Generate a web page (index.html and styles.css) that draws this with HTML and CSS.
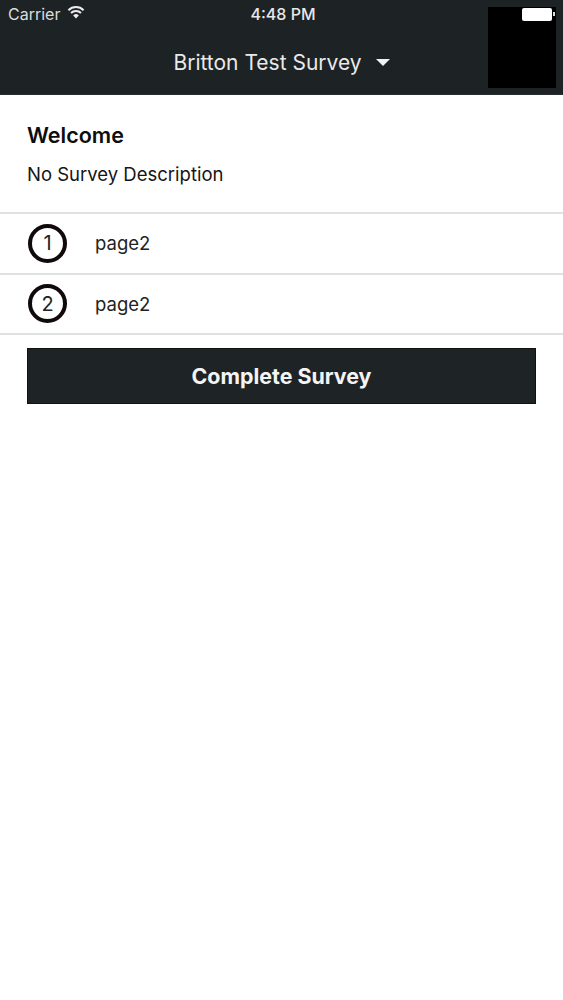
FILE: index.html
```html
<!DOCTYPE html>
<html lang="en">
<head>
<meta charset="utf-8">
<title>Britton Test Survey</title>
<link rel="stylesheet" href="styles.css">
</head>
<body>
<header class="topbar">
  <div class="status">
    <div class="status-left">
      <span class="carrier">Carrier</span>
      <svg class="wifi" viewBox="0 0 18 13" width="18" height="13"><path d="M9 12.6 6.2 9.4a4 4 0 0 1 5.6 0Z" fill="#ececec"/><path d="M4 7a7 7 0 0 1 10 0" fill="none" stroke="#ececec" stroke-width="2"/><path d="M1.4 4.2a10.8 10.8 0 0 1 15.2 0" fill="none" stroke="#ececec" stroke-width="2"/></svg>
    </div>
    <span class="time">4:48 PM</span>
  </div>
  <div class="title-row">
    <span class="title">Britton Test Survey</span>
    <span class="caret"></span>
  </div>
  <div class="blackout">
    <span class="battery"></span>
    <span class="battery-tip"></span>
  </div>
</header>
<main>
  <section class="intro">
    <h1>Welcome</h1>
    <p>No Survey Description</p>
  </section>
  <ul class="pages">
    <li><span class="num">1</span><span class="name">page2</span></li>
    <li><span class="num">2</span><span class="name">page2</span></li>
  </ul>
  <div class="actions"><button class="complete">Complete Survey</button></div>
</main>
</body>
</html>
```
FILE: styles.css
```css
* { box-sizing: border-box; }
html, body { margin: 0; padding: 0; }
body {
  width: 563px;
  height: 1000px;
  background: #fff;
  font-family: Inter, "Liberation Sans", sans-serif;
  color: #151515;
  overflow: hidden;
}
.topbar {
  position: relative;
  height: 95px;
  background: #1d2225;
  border-bottom: 1px solid #2a2e30;
  color: #eee;
}
.status {
  position: relative;
  height: 29px;
  padding: 5px 0 0 8px;
}
.status-left { display: flex; align-items: center; gap: 7px; height: 18px; }
.carrier { font-size: 16px; color: #dcdcdc; }
.wifi { margin-top: -4px; }
.time {
  position: absolute;
  top: 5px;
  left: 0;
  width: 100%;
  text-align: center;
  line-height: 18px;
  font-size: 16px;
  font-weight: 500;
  color: #e8e8e8;
  padding-left: 3px;
}
.title-row {
  display: flex;
  align-items: center;
  justify-content: center;
  height: 36px;
  margin-top: 15px;
  gap: 14px;
}
.title { font-size: 21px; color: #eaeaea; }
.caret {
  width: 0;
  height: 0;
  border-left: 7px solid transparent;
  border-right: 7px solid transparent;
  border-top: 7px solid #f2f2f2;
  margin-top: 1px;
}
.blackout {
  position: absolute;
  top: 7px;
  left: 488px;
  width: 68px;
  height: 81px;
  background: #000;
}
.battery {
  position: absolute;
  top: 1px;
  left: 34px;
  width: 30px;
  height: 13px;
  background: #fff;
  border-radius: 2px;
}
.battery-tip {
  position: absolute;
  top: 5px;
  left: 65px;
  width: 2px;
  height: 4px;
  background: #ddd;
}
.intro { padding: 28px 27px 0; height: 117px; }
.intro h1 { margin: 0; font-size: 21.5px; font-weight: 600; line-height: 24px; color: #0d0d0d; }
.intro p { margin: 16px 0 0; font-size: 18.5px; line-height: 22px; }
.pages { list-style: none; margin: 0; padding: 0; border-top: 2px solid #e0e0e0; }
.pages li {
  display: flex;
  align-items: center;
  height: 60.5px;
  padding: 0 28px;
  border-bottom: 2px solid #e0e0e0;
}
.num {
  display: flex;
  align-items: center;
  justify-content: center;
  width: 39px;
  height: 39px;
  border: 4px solid #100a0c;
  border-radius: 50%;
  font-size: 20px;
  margin-right: 28px;
  color: #222;
}
.name { font-size: 18.5px; color: #222; }
.actions { padding: 13px 27px 0; }
.complete {
  display: block;
  width: 509px;
  height: 56px;
  background: #1e2426;
  border: 1px solid #111;
  color: #f4f4f4;
  font-family: inherit;
  font-size: 21.4px;
  font-weight: 700;
  padding: 0;
}
```
